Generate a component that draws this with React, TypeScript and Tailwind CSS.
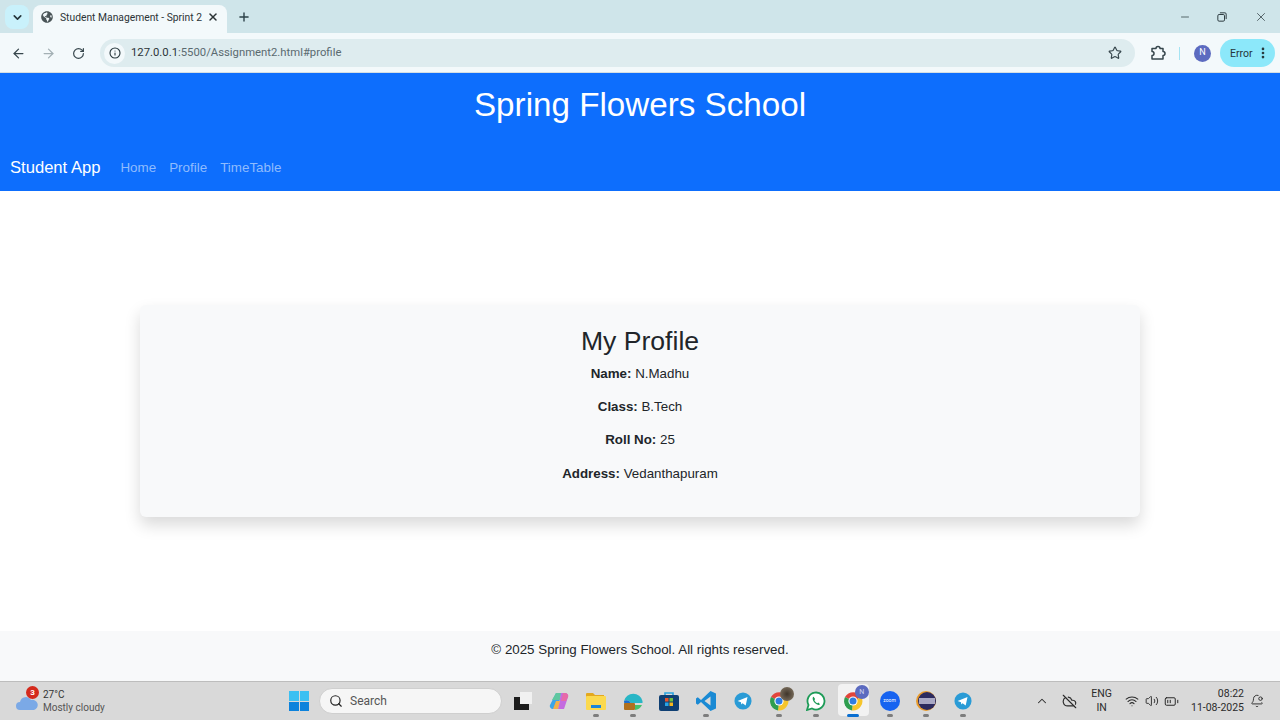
import React from "react";
import { ArrowLeft, ArrowRight, RotateCw, Info, Star, ChevronDown, ChevronUp, X, Plus, Minus, Search, Volume2, Wifi, BatteryMedium, BellDot, CloudOff, EllipsisVertical } from "lucide-react";
import { FaGlobeAmericas } from "react-icons/fa";

const Pip = () => (
  <div className="absolute bottom-[3px] left-1/2 -translate-x-1/2 w-[6px] h-[3px] rounded-full bg-[#7d7d7d]" />
);

const Cell = ({ children, pip = false }: { children: React.ReactNode; pip?: boolean }) => (
  <div className="relative w-[36.7px] h-[38px] flex items-center justify-center shrink-0">
    {children}
    {pip && <Pip />}
  </div>
);

const ChromeIcon = ({ badge }: { badge: "photo" | "n" }) => (
  <div className="relative w-[20px] h-[20px]">
    <svg viewBox="0 0 20 20" className="w-[20px] h-[20px]">
      <path d="M10 10 L2 6 A9.5 9.5 0 0 1 18.5 6 Z" fill="#e2453b" />
      <path d="M10 10 L18.5 6 A9.5 9.5 0 0 1 9 19.5 Z" fill="#f6c52c" />
      <path d="M10 10 L9 19.5 A9.5 9.5 0 0 1 2 6 Z" fill="#2f9e4f" />
      <circle cx="10" cy="10" r="4.6" fill="#fff" />
      <circle cx="10" cy="10" r="3.5" fill="#2f7de1" />
    </svg>
    {badge === "photo" ? (
      <div className="absolute -top-[4px] -right-[5px] w-[14px] h-[14px] rounded-full bg-[radial-gradient(circle,#3f352a,#8a7d6a)]" />
    ) : (
      <div className="absolute -top-[6px] -right-[6px] w-[14px] h-[14px] rounded-full bg-[#5c6bc0] text-[#cfd4f0] text-[7px] flex items-center justify-center">N</div>
    )}
  </div>
);

const Telegram = () => (
  <svg viewBox="0 0 20 20" className="w-[18px] h-[18px]">
    <circle cx="10" cy="10" r="9.5" fill="#2a9bd6" />
    <path d="M4 10 L15 5.5 L13 15 L9.5 12.5 L8 14 L7.8 11.5 Z" fill="#fff" />
  </svg>
);

export default function App() {
  return (
    <div className="w-[1280px] h-[720px] overflow-hidden flex flex-col bg-white font-['Liberation_Sans',Arial,sans-serif]">
      {/* tab strip */}
      <div className="h-[33px] shrink-0 bg-[#cfe5ea] flex items-center font-['Roboto',sans-serif]">
        <div className="ml-[5px] mt-[1px] w-[24px] h-[24px] rounded-lg bg-[#c9f1fb] flex items-center justify-center">
          <ChevronDown size={13} strokeWidth={3} color="#26363b" />
        </div>
        <div className="ml-[4px] mt-[5px] w-[194px] h-[28px] bg-[#f3f9fb] rounded-t-lg flex items-center pl-[8px] pr-[8px] pb-[4px]">
          <FaGlobeAmericas size={12} color="#4a5558" className="shrink-0" />
          <span className="ml-[7px] pt-[1px] text-[10.3px] text-[#2c3437] whitespace-nowrap">Student Management - Sprint 2</span>
          <X size={12} strokeWidth={3} color="#2c3437" className="ml-auto shrink-0" />
        </div>
        <Plus size={14} strokeWidth={2.4} color="#2c4148" className="ml-[10px]" />
        <div className="ml-auto flex items-center text-[#2f3d42]">
          <Minus size={12} strokeWidth={1.5} className="mr-[26px]" />
          <svg viewBox="0 0 12 12" className="w-[10px] h-[10px] mr-[27px]" fill="none" stroke="#2f3d42" strokeWidth="1.2">
            <rect x="1" y="3" width="8" height="8" rx="1.5" />
            <path d="M3.5 1 H9.5 A1.5 1.5 0 0 1 11 2.5 V8.5" />
          </svg>
          <X size={14} strokeWidth={1.3} className="mr-[12px]" />
        </div>
      </div>
      {/* toolbar */}
      <div className="h-[40px] shrink-0 bg-[#f3f9fb] flex items-center pt-[1px] font-['Roboto',sans-serif] border-b border-[#d5dfe3]">
        <ArrowLeft size={15} strokeWidth={2} color="#37474d" className="ml-[11px]" />
        <ArrowRight size={15} strokeWidth={2} color="#a3b0b4" className="ml-[15px]" />
        <RotateCw size={13} strokeWidth={2.2} color="#37474d" className="ml-[16px]" />
        <div className="ml-[15px] w-[1035px] h-[28px] rounded-full bg-[#deecef] flex items-center pl-[4px]">
          <div className="w-[21px] h-[21px] rounded-full bg-[#f3f9fb] flex items-center justify-center">
            <Info size={12} strokeWidth={2.2} color="#26363b" />
          </div>
          <span className="ml-[6px] pt-[1px] text-[11.3px] text-[#5a6a70] whitespace-nowrap"><span className="text-[#2c3437]">127.0.0.1</span>:5500/Assignment2.html#profile</span>
          <Star size={14} strokeWidth={2} color="#37474d" className="ml-auto mr-[13px]" />
        </div>
        <svg viewBox="0 0 16 16" className="w-[16px] h-[16px] ml-[15px]" fill="none" stroke="#37474d" strokeWidth="1.5" strokeLinejoin="round">
          <path d="M2 3.5 H6 A2 2 0 0 1 10 3.5 H13 V6.5 A2 2 0 0 1 13 10.5 V14 H2 V10.5 A2 2 0 0 0 2 6.5 Z" />
        </svg>
        <div className="ml-[13px] w-[1px] h-[13px] bg-[#a5e4f3]" />
        <div className="ml-[14px] w-[17px] h-[17px] rounded-full bg-[#5c6bc0] text-white text-[9px] flex items-center justify-center">N</div>
        <div className="ml-[9px] w-[55px] h-[28px] rounded-full bg-[#8ce8fa] flex items-center pl-[10px] text-[10.5px] text-[#26363b]">
          <span className="pt-[1px]">Error</span>
          <EllipsisVertical size={14} strokeWidth={2.6} className="ml-auto mr-[5px]" />
        </div>
      </div>

      {/* header */}
      <header className="h-[118px] shrink-0 bg-[#0d6efd] text-white flex flex-col">
        <h1 className="mt-[11px] text-center text-[33.2px] leading-[41px]">Spring Flowers School</h1>
        <nav className="mt-[31px] pl-[10px] flex items-center">
          <span className="text-[16.6px] leading-[24px]">Student App</span>
          <span className="ml-[20px] text-[13.4px] text-[#8fbcfe]">Home</span>
          <span className="ml-[13px] text-[13.4px] text-[#8fbcfe]">Profile</span>
          <span className="ml-[13px] text-[13.4px] text-[#8fbcfe]">TimeTable</span>
        </nav>
      </header>

      {/* main */}
      <main className="flex-1 flex items-center justify-center">
        <section className="w-[1000px] h-[212px] mb-[1px] bg-[#f8f9fa] rounded-md shadow-[0_8px_16px_rgba(0,0,0,0.15)] text-center text-[#212529] pt-[20px]">
          <h2 className="text-[26.6px] leading-[33px]">My Profile</h2>
          <div className="mt-[7px] text-[13.33px] leading-[17px] flex flex-col gap-[16.4px]">
            <p><b>Name:</b> N.Madhu</p>
            <p><b>Class:</b> B.Tech</p>
            <p><b>Roll No:</b> 25</p>
            <p><b>Address:</b> Vedanthapuram</p>
          </div>
        </section>
      </main>

      {/* footer */}
      <footer className="h-[50px] shrink-0 bg-[#f8f9fa] flex justify-center pt-[10px] text-[13.33px] leading-[17px] text-[#212529]">
        © 2025 Spring Flowers School. All rights reserved.
      </footer>

      {/* taskbar */}
      <div className="h-[39px] shrink-0 bg-[#d9d9d9] border-t border-[#bdbdbd] flex items-center font-['Roboto',sans-serif] text-[#333]">
        <div className="relative ml-[16px] w-[22px] h-[22px]">
          <svg viewBox="0 0 22 22" className="w-[22px] h-[22px]">
            <path d="M4 20 A4 4 0 0 1 4 12 A6 6 0 0 1 15 10 A5 5 0 0 1 18 20 Z" fill="#7ba9e6" />
          </svg>
          <div className="absolute -top-[4px] left-[10px] w-[13px] h-[13px] rounded-full bg-[#d42a1c] text-white text-[8px] font-bold flex items-center justify-center">3</div>
        </div>
        <div className="ml-[5px] w-[64px] text-[10px] leading-[13px]">
          <div>27°C</div>
          <div className="text-[#555]">Mostly cloudy</div>
        </div>

        <div className="ml-[182px] grid grid-cols-2 gap-[1px] w-[20px] h-[20px]">
          <div className="bg-[#3cc0f2]" /><div className="bg-[#3cc0f2]" /><div className="bg-[#0c82dc]" /><div className="bg-[#0c82dc]" />
        </div>
        <div className="ml-[10px] w-[183px] h-[26px] rounded-full bg-[#f6f6f6] border border-[#cfcfcf] flex items-center pl-[9px]">
          <Search size={14} strokeWidth={2} color="#222" />
          <span className="ml-[7px] text-[12px] text-[#555]">Search</span>
        </div>

        {/* task view */}
        <div className="relative ml-[12px] w-[18px] h-[18px]">
          <div className="absolute left-[0px] bottom-[0px] w-[15px] h-[13px] bg-[#1c1c1c]" />
          <div className="absolute right-0 top-0 w-[12px] h-[12px] bg-[#f1f1f1]" />
        </div>

        <div className="ml-[9px] flex items-center">
          <Cell>
            <svg viewBox="0 0 20 20" className="w-[20px] h-[20px]">
              <path d="M7 2 H12 L9 18 H4 A3 3 0 0 1 1 14 Z" fill="#3aa5e8" />
              <path d="M7 2 H12 L11 9 H3 Z" fill="#5fc7a0" />
              <path d="M12 2 H16 A3 3 0 0 1 19 6 L15 18 H9 Z" fill="#c46be0" />
              <path d="M4 18 L7 10 H11 L9 18 Z" fill="#f2b04b" />
              <path d="M14 2 H16 A3 3 0 0 1 19 6 L17 10 H12 Z" fill="#e66aa8" />
            </svg>
          </Cell>
          <Cell pip>
            <svg viewBox="0 0 20 18" className="w-[20px] h-[18px]">
              <path d="M0 2 A1 1 0 0 1 1 1 H7 L9 3 H18 V6 H0 Z" fill="#e3a81f" />
              <rect x="0" y="4" width="20" height="14" rx="1" fill="#fbd94e" />
              <rect x="5" y="13" width="10" height="3" fill="#1a86d8" />
            </svg>
          </Cell>
          <Cell pip>
            <svg viewBox="0 0 20 20" className="w-[20px] h-[20px]">
              <path d="M1 10 A9.5 9.5 0 0 1 19.5 10 V12 H8 A5 5 0 0 0 1 10 Z" fill="#29b6c6" />
              <path d="M1 10 A5 5 0 0 1 8 12 V19 A9 9 0 0 1 1 10 Z" fill="#1a6fd0" />
              <rect x="1" y="12" width="11" height="7" rx="1" fill="#b0701e" />
              <path d="M12 14 H19 A9 9 0 0 1 12 19 Z" fill="#46c26a" />
            </svg>
          </Cell>
          <Cell>
            <svg viewBox="0 0 20 20" className="w-[20px] h-[20px]">
              <path d="M6 4 V2 H14 V4" fill="none" stroke="#27a2e0" strokeWidth="1.6" />
              <rect x="0" y="4" width="20" height="16" rx="2" fill="#0f3f73" />
              <rect x="6" y="7" width="3.5" height="3.5" fill="#e8532b" />
              <rect x="10.5" y="7" width="3.5" height="3.5" fill="#6fbf3f" />
              <rect x="6" y="11.5" width="3.5" height="3.5" fill="#28a4e6" />
              <rect x="10.5" y="11.5" width="3.5" height="3.5" fill="#f7b81e" />
            </svg>
          </Cell>
          <Cell pip>
            <svg viewBox="0 0 20 20" className="w-[20px] h-[20px]">
              <path d="M14.5 0 L20 2.5 V17.5 L14.5 20 L5 11 L1.8 13.8 L0 12.5 V7.5 L1.8 6.2 L5 9 Z M14.5 5.5 L8.5 10 L14.5 14.5 Z" fill="#1a8ad4" fillRule="evenodd" />
            </svg>
          </Cell>
          <Cell><Telegram /></Cell>
          <Cell pip><ChromeIcon badge="photo" /></Cell>
          <Cell pip>
            <svg viewBox="0 0 20 20" className="w-[20px] h-[20px]" fill="none">
              <path d="M1 19 L2.5 14 A8.5 8.5 0 1 1 6 17.5 Z" fill="#fff" stroke="#1d9b57" strokeWidth="1.8" />
              <path d="M7 6 C6 8 7.5 11 9.5 12.5 C11 13.7 13 14.5 14 13.3 L12.4 11.6 L11.3 12.2 C10 11.6 9 10.5 8.4 9.2 L9.1 8 L7.6 5.8 Z" fill="#1d9b57" />
            </svg>
          </Cell>
          <Cell>
            <div className="absolute left-[3px] top-[2px] w-[31px] h-[32px] rounded-[4px] bg-[#f2f2f2]" />
            <div className="relative"><ChromeIcon badge="n" /></div>
            <div className="absolute bottom-[3px] left-1/2 -translate-x-1/2 w-[12px] h-[3px] rounded-full bg-[#0a6fd1]" />
          </Cell>
          <Cell pip>
            <div className="w-[20px] h-[20px] rounded-full bg-[#1763f0] text-white text-[5px] flex items-center justify-center">zoom</div>
          </Cell>
          <Cell pip>
            <svg viewBox="0 0 20 20" className="w-[20px] h-[20px]">
              <circle cx="10" cy="10" r="10" fill="#e89a2a" />
              <circle cx="11" cy="10" r="9" fill="#2c2a5e" />
              <rect x="3" y="7" width="16" height="6" fill="#a9a8c4" />
            </svg>
          </Cell>
          <Cell pip><Telegram /></Cell>
        </div>

        <div className="ml-auto flex items-center text-[#2b2b2b]">
          <ChevronUp size={14} strokeWidth={1.8} />
          <CloudOff size={15} strokeWidth={1.8} className="ml-[13px]" />
          <div className="ml-[14px] text-[10.5px] leading-[14px] text-center">ENG<br />IN</div>
          <Wifi size={14} strokeWidth={1.8} className="ml-[13px]" />
          <Volume2 size={14} strokeWidth={1.6} className="ml-[6px]" />
          <BatteryMedium size={15} strokeWidth={1.6} className="ml-[5px]" />
          <div className="ml-[12px] text-[10.5px] leading-[14px] text-right">08:22<br />11-08-2025</div>
          <BellDot size={14} strokeWidth={1.6} className="ml-[6px] mr-[16px]" />
        </div>
      </div>
    </div>
  );
}
